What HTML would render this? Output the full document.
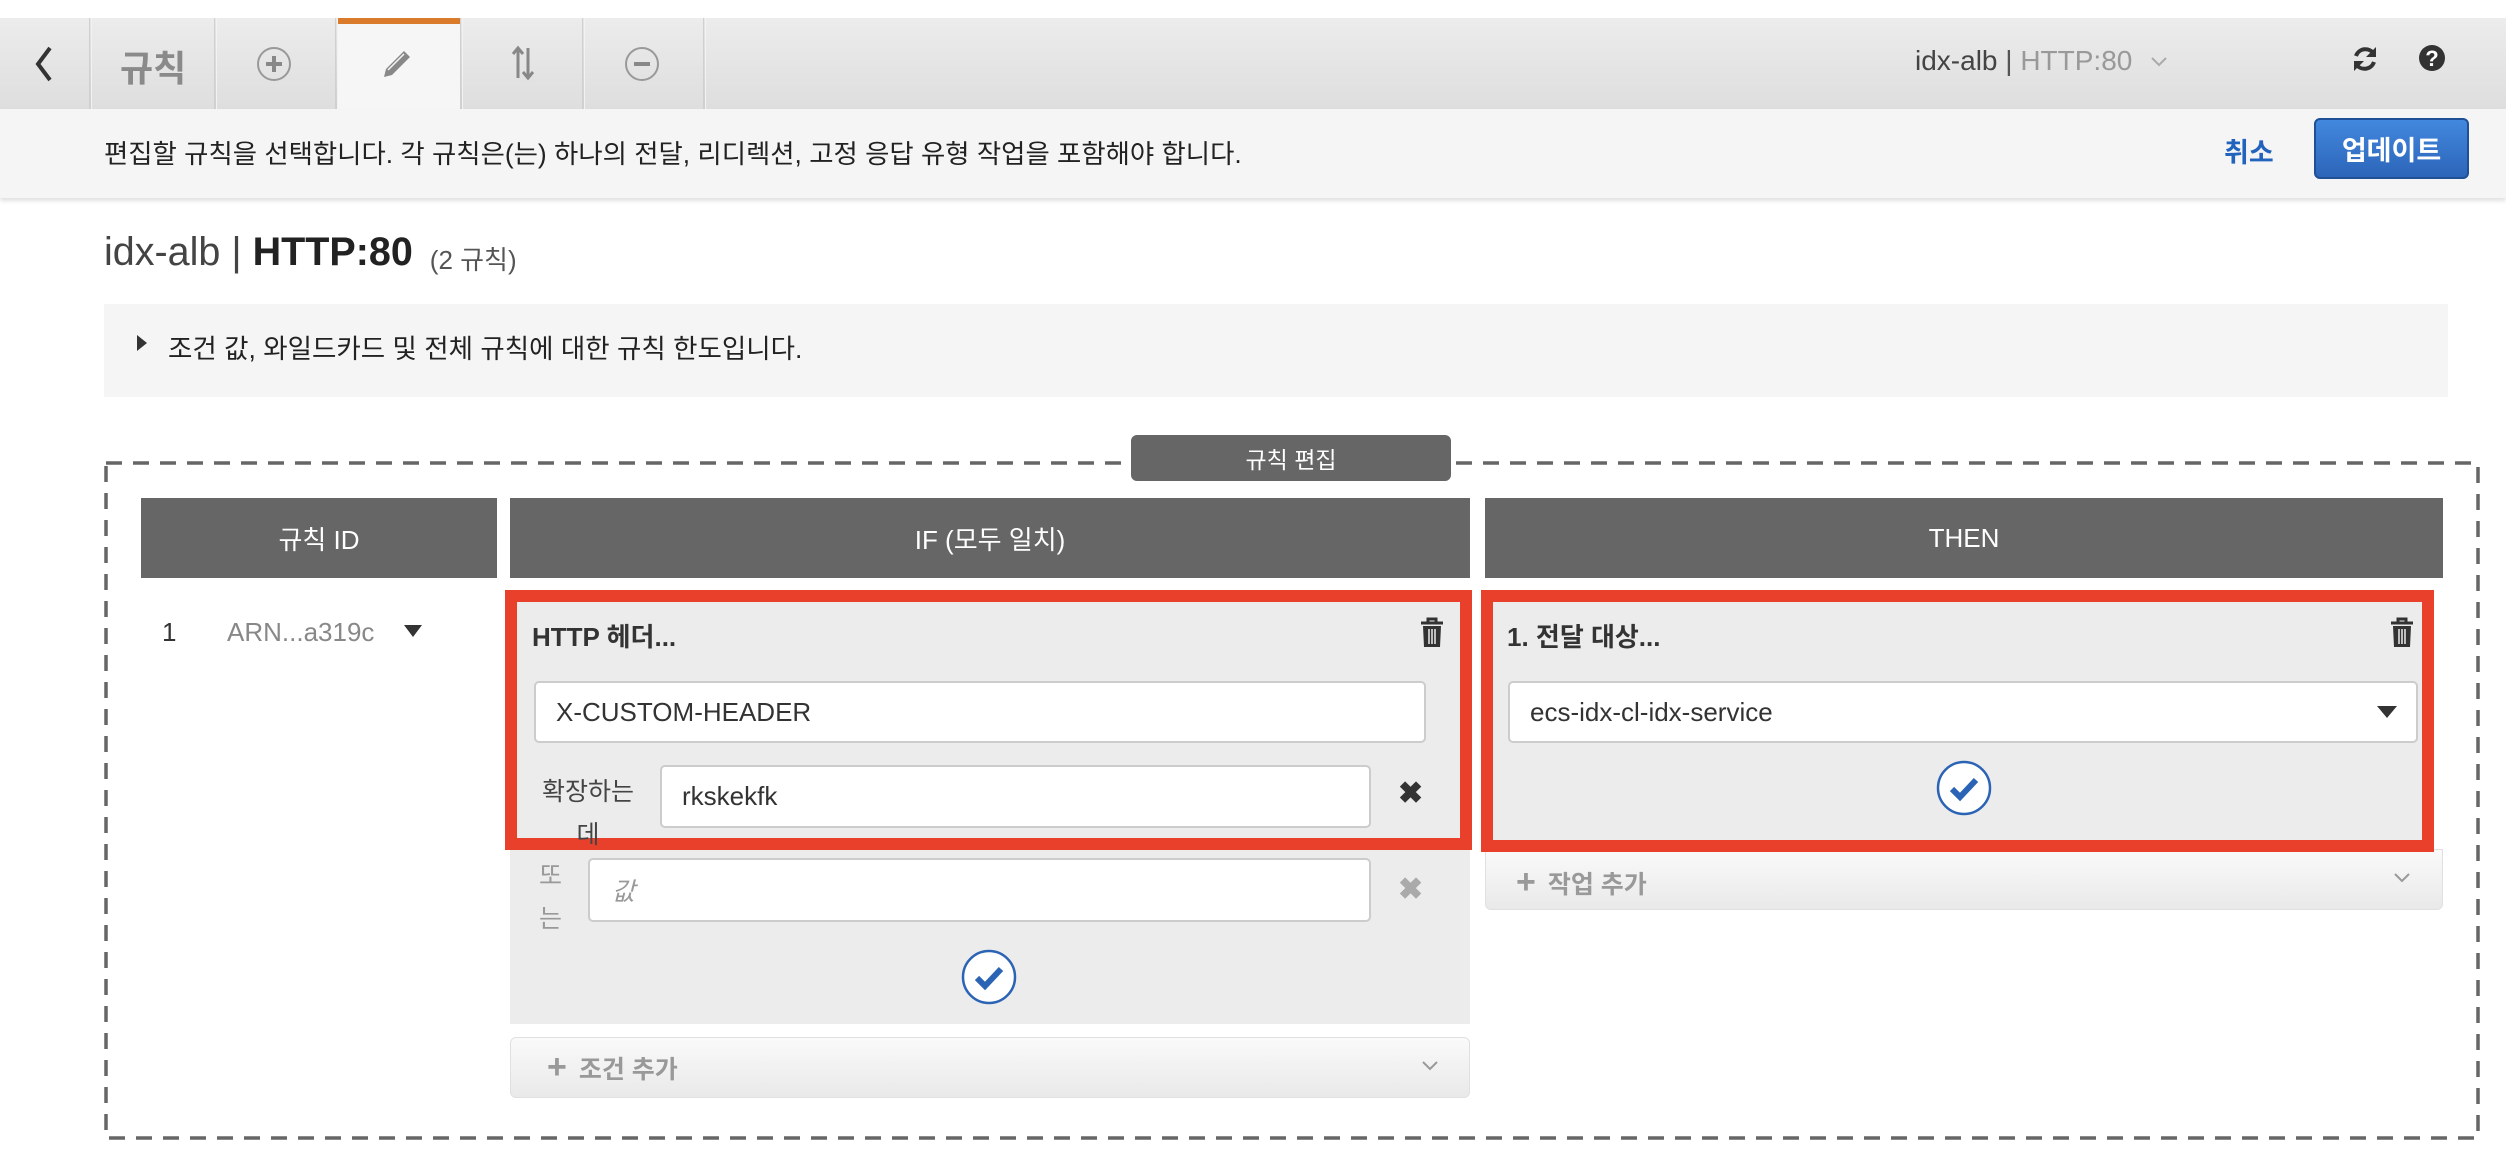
<!DOCTYPE html>
<html><head><meta charset="utf-8"><style>
*{box-sizing:border-box;margin:0;padding:0}
body{width:2506px;height:1158px;background:#fff;font-family:"Liberation Sans","Noto Sans CJK KR",sans-serif;color:#333;position:relative;overflow:hidden}
.a{position:absolute}
.tb{left:0;top:18px;width:2506px;height:91px;background:linear-gradient(#ececec,#dedede)}
.sep{top:18px;width:3px;height:91px;background:linear-gradient(#e6e6e6,#cfcfcf);border-left:1px solid #d0d0d0;border-right:1px solid #f2f2f2}
.info{left:0;top:109px;width:2506px;height:89px;background:#f5f5f5;box-shadow:0 3px 4px rgba(0,0,0,.12)}
.hd{background:#666;color:#fff;font-size:26px;display:flex;align-items:center;justify-content:center}
.red{border:12px solid #e8402a;background:#ececec}
.inp{background:#fff;border:2px solid #ccc;border-radius:5px;font-size:26px;display:flex;align-items:center;color:#333}
.addbar{background:linear-gradient(#fafafa,#e9e9e9);border:1px solid #e0e0e0;border-radius:0 0 6px 6px;color:#999;font-size:25px;font-weight:bold;display:flex;align-items:center}
</style></head><body>
<div class="a tb"></div>
<svg class="a" style="left:30px;top:44px" width="28" height="40" viewBox="0 0 28 40"><path d="M20 4 L8 20 L20 36" stroke="#333" stroke-width="4" fill="none"/></svg>
<div class="a sep" style="left:89px"></div>
<div class="a" style="left:120px;top:40px;font-size:36px;font-weight:bold;color:#8a8a8a">규칙</div>
<div class="a sep" style="left:214px"></div>
<svg class="a" style="left:254px;top:44px" width="40" height="40"><circle cx="20" cy="20" r="16" fill="none" stroke="#999" stroke-width="2"/><path d="M20 12v16M12 20h16" stroke="#888" stroke-width="4"/></svg>
<div class="a sep" style="left:335px"></div>
<div class="a" style="left:338px;top:18px;width:122px;height:91px;background:#f6f6f6;border-top:6px solid #d97b2b"></div>
<svg class="a" style="left:380px;top:47px" width="34" height="34" viewBox="0 0 34 34"><path d="M4 30 L6 22 L24 4 L30 10 L12 28 Z" fill="#888"/><path d="M8 23 L24 7" stroke="#f6f6f6" stroke-width="1.5"/></svg>
<div class="a sep" style="left:460px"></div>
<svg class="a" style="left:510px;top:44px" width="26" height="38"><path d="M8 4v30M3 10l5-6 5 6M18 4v30M13 28l5 6 5-6" stroke="#888" stroke-width="3" fill="none"/></svg>
<div class="a sep" style="left:582px"></div>
<svg class="a" style="left:622px;top:44px" width="40" height="40"><circle cx="20" cy="20" r="16" fill="none" stroke="#999" stroke-width="2"/><path d="M12 20h16" stroke="#888" stroke-width="4"/></svg>
<div class="a sep" style="left:703px"></div>
<div class="a" style="left:1915px;top:45px;font-size:28px;color:#444">idx-alb <span style="color:#555">|</span> <span style="color:#999">HTTP:80</span></div>
<svg class="a" style="left:2150px;top:56px" width="18" height="12"><path d="M2 2l7 7 7-7" stroke="#aaa" stroke-width="2" fill="none"/></svg>
<svg class="a" style="left:2350px;top:44px" width="30" height="30" viewBox="0 0 30 30"><path d="M24 10 A10 10 0 0 0 6 12 M6 20 A10 10 0 0 0 24 18" stroke="#333" stroke-width="4" fill="none"/><path d="M26 3v10h-10z M4 27V17h10z" fill="#333"/></svg>
<svg class="a" style="left:2418px;top:42px" width="28" height="32"><circle cx="14" cy="16" r="13" fill="#333"/><text x="14" y="24" font-size="22" font-weight="bold" fill="#fff" text-anchor="middle" font-family="Liberation Sans">?</text></svg>

<div class="a info"></div>
<div class="a" style="left:104px;top:132px;font-size:26.4px;color:#222">편집할 규칙을 선택합니다. 각 규칙은(는) 하나의 전달, 리디렉션, 고정 응답 유형 작업을 포함해야 합니다.</div>
<div class="a" style="left:2224px;top:131px;font-size:27px;font-weight:bold;color:#2264bd">취소</div>
<div class="a" style="left:2314px;top:118px;width:155px;height:61px;border-radius:6px;background:linear-gradient(#4288de,#2c65b9);border:2px solid #1f4f94;color:#fff;font-size:27px;font-weight:bold;display:flex;align-items:center;justify-content:center">업데이트</div>

<div class="a" style="left:104px;top:230px;font-size:39.5px;color:#444;white-space:nowrap"><span>idx-alb</span> | <b style="color:#222">HTTP:80</b> <span style="font-size:26px;color:#555;position:relative;top:4px;margin-left:6px">(2 규칙)</span></div>

<div class="a" style="left:104px;top:304px;width:2344px;height:93px;background:#f5f5f5"></div>
<svg class="a" style="left:136px;top:334px" width="12" height="18"><path d="M1 1l10 8-10 8z" fill="#333"/></svg>
<div class="a" style="left:168px;top:327px;font-size:26.5px;color:#222">조건 값, 와일드카드 및 전체 규칙에 대한 규칙 한도입니다.</div>

<svg class="a" style="left:104px;top:461px" width="2376" height="679"><rect x="2" y="2" width="2372" height="675" fill="none" stroke="#666" stroke-width="3.5" stroke-dasharray="16 11"/></svg>
<div class="a" style="left:1131px;top:435px;width:320px;height:46px;background:#666;border-radius:6px;color:#fff;font-size:23px;display:flex;align-items:center;justify-content:center">규칙 편집</div>

<div class="a hd" style="left:141px;top:498px;width:356px;height:80px">규칙 ID</div>
<div class="a hd" style="left:510px;top:498px;width:960px;height:80px">IF (모두 일치)</div>
<div class="a hd" style="left:1485px;top:498px;width:958px;height:80px">THEN</div>

<div class="a" style="left:162px;top:617px;font-size:26px;color:#333">1</div>
<div class="a" style="left:227px;top:617px;font-size:26px;color:#888">ARN...a319c</div>
<svg class="a" style="left:403px;top:624px" width="20" height="14"><path d="M1 1h18l-9 12z" fill="#333"/></svg>

<div class="a" style="left:510px;top:849px;width:960px;height:175px;background:#ececec"></div>
<div class="a red" style="left:505px;top:590px;width:967px;height:260px"></div>
<div class="a" style="left:532px;top:617px;font-size:26px;font-weight:bold;color:#333">HTTP 헤더...</div>
<svg class="a" style="left:1419px;top:617px" width="26" height="32" viewBox="0 0 26 32"><path d="M2 6h22M9 6V2h8v4" stroke="#333" stroke-width="3" fill="none"/><path d="M4 9h18l-1 21H5z" fill="#333"/><path d="M10 12v15M13 12v15M16 12v15" stroke="#ececec" stroke-width="1.5"/></svg>
<div class="a inp" style="left:534px;top:681px;width:892px;height:62px;padding-left:20px">X-CUSTOM-HEADER</div>
<div class="a" style="left:538px;top:771px;font-size:25px;color:#444;width:100px;text-align:center;line-height:43px">확장하는<br>데</div>
<div class="a inp" style="left:660px;top:765px;width:711px;height:63px;padding-left:20px">rkskekfk</div>
<div class="a" style="left:1398px;top:776px;font-size:30px;font-weight:bold;color:#333">✖</div>
<div class="a" style="left:539px;top:855px;width:20px;font-size:25px;color:#999;line-height:43px">또<br>는</div>
<div class="a inp" style="left:588px;top:858px;width:783px;height:64px;padding-left:22px;color:#999;font-style:italic;font-size:25px">값</div>
<div class="a" style="left:1398px;top:872px;font-size:30px;font-weight:bold;color:#aaa">✖</div>
<svg class="a" style="left:960px;top:948px" width="58" height="58"><circle cx="29" cy="29" r="26" fill="#fff" stroke="#2b63b5" stroke-width="2.5"/><path d="M17 30l8 8 16-17" stroke="#2b63b5" stroke-width="6" fill="none"/></svg>
<div class="a addbar" style="left:510px;top:1037px;width:960px;height:61px;border-radius:6px;padding-left:36px">
<span style="font-size:34px;margin-right:12px">+</span>조건 추가</div>
<svg class="a" style="left:1421px;top:1060px" width="18" height="12"><path d="M2 2l7 7 7-7" stroke="#999" stroke-width="2" fill="none"/></svg>

<div class="a addbar" style="left:1485px;top:849px;width:958px;height:61px;padding-left:30px;padding-top:6px">
<span style="font-size:34px;margin-right:12px">+</span>작업 추가</div>
<svg class="a" style="left:2393px;top:872px" width="18" height="12"><path d="M2 2l7 7 7-7" stroke="#999" stroke-width="2" fill="none"/></svg>
<div class="a red" style="left:1481px;top:590px;width:953px;height:262px"></div>
<div class="a" style="left:1507px;top:617px;font-size:26px;font-weight:bold;color:#333">1. 전달 대상...</div>
<svg class="a" style="left:2389px;top:617px" width="26" height="32" viewBox="0 0 26 32"><path d="M2 6h22M9 6V2h8v4" stroke="#333" stroke-width="3" fill="none"/><path d="M4 9h18l-1 21H5z" fill="#333"/><path d="M10 12v15M13 12v15M16 12v15" stroke="#ececec" stroke-width="1.5"/></svg>
<div class="a inp" style="left:1508px;top:681px;width:910px;height:62px;padding-left:20px">ecs-idx-cl-idx-service</div>
<svg class="a" style="left:2376px;top:705px" width="22" height="14"><path d="M1 1h20l-10 12z" fill="#333"/></svg>
<svg class="a" style="left:1935px;top:759px" width="58" height="58"><circle cx="29" cy="29" r="26" fill="#fff" stroke="#2b63b5" stroke-width="2.5"/><path d="M17 30l8 8 16-17" stroke="#2b63b5" stroke-width="6" fill="none"/></svg>
</body></html>
